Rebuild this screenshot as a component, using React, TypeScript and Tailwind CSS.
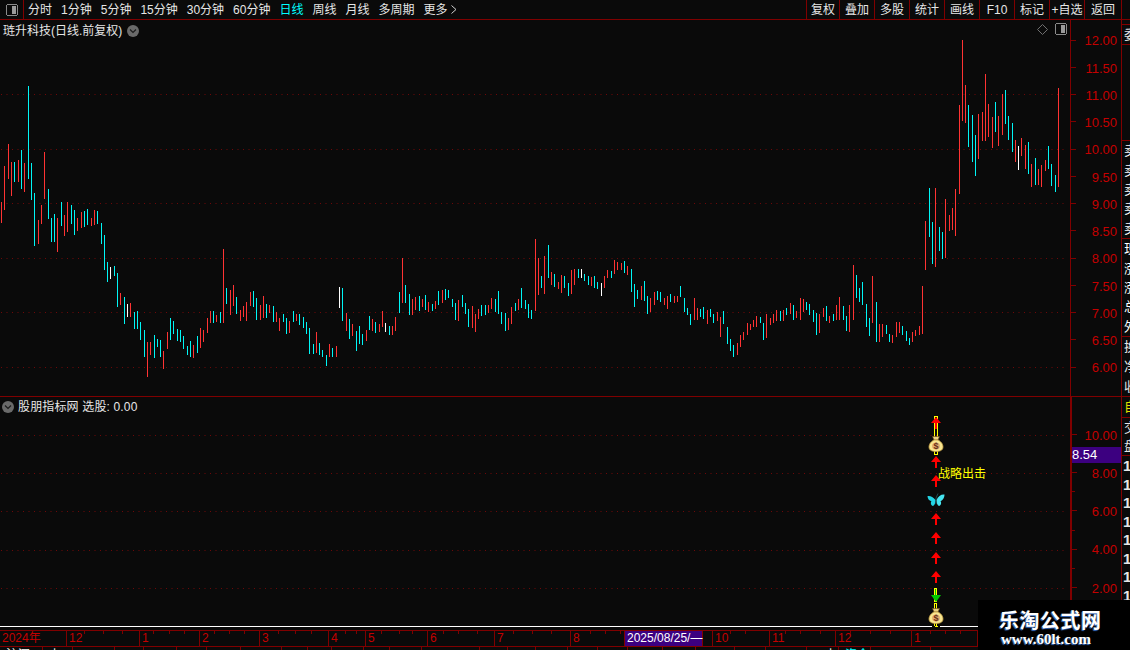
import React from 'react';

type Bar = [number, number, number, string];

// bar coords were read off 3x crops, so each group keeps its crop origin
const groups: { x0: number; y0: number; bars: Bar[] }[] = [
  {
    x0: 0,
    y0: 130,
    bars: [
      [4,216,279,'r'],[13,108,240,'r'],[25,42,147,'r'],[34,96,198,'r'],[43,96,156,'c'],[55,90,156,'r'],[64,60,177,'c'],[73,99,186,'r'],[85,-132,147,'c'],[94,99,210,'c'],
      [103,189,348,'c'],[115,270,342,'r'],[124,225,282,'r'],[133,66,207,'r'],[145,177,267,'c'],[154,264,336,'c'],[163,252,336,'c'],[172,264,366,'r'],[184,216,288,'c'],[193,255,318,'r'],
      [202,216,306,'r'],[214,225,282,'c'],[223,240,315,'c'],[232,264,303,'r'],[244,246,294,'r'],[253,243,291,'c'],[262,237,285,'c'],[274,264,288,'r'],[283,240,285,'r'],[292,243,282,'c'],
      [304,279,342,'c'],[313,315,420,'c'],[322,396,456,'c'],[331,411,447,'w'],[343,408,438,'c'],[352,429,531,'c'],[361,489,525,'r'],[373,501,582,'c'],[382,522,561,'w'],[391,519,561,'r'],
      [403,546,597,'c'],[412,543,597,'c'],[421,576,630,'c'],[433,600,681,'c'],[442,636,741,'r'],[451,636,675,'r'],[463,615,684,'c'],[472,627,651,'c'],[481,630,681,'c'],[490,663,717,'r'],
      [502,606,657,'r'],[511,564,630,'c'],[520,573,612,'c'],[532,597,633,'c'],[541,600,636,'c'],[550,618,657,'c'],[562,648,675,'c'],[571,633,681,'c'],[580,645,684,'r'],[592,618,669,'c'],
      [601,594,654,'r'],[610,600,636,'r'],[622,564,609,'r'],[631,543,579,'r'],[640,543,579,'c'],[649,555,576,'r'],[661,546,579,'c'],[670,357,579,'r'],[679,474,522,'c'],[691,480,555,'r'],
      [700,465,528,'r'],[709,501,552,'c'],[721,540,573,'r'],[730,528,561,'r'],[739,516,573,'r'],[751,486,528,'r'],[760,483,531,'c'],[769,504,570,'c'],[781,525,570,'r'],[790,498,564,'r'],
      [799,522,564,'c'],[808,525,549,'r'],[820,528,576,'c'],[829,546,576,'r'],[838,564,603,'r'],[850,552,576,'c'],[859,564,612,'c'],[868,573,609,'r'],[880,543,576,'c'],[889,552,573,'r'],
      [898,552,585,'c'],[910,561,594,'c'],[919,576,612,'c'],[928,594,672,'c'],[940,642,672,'c'],[949,606,669,'r'],[958,639,675,'c'],[967,660,681,'c'],[979,675,708,'c'],[988,642,681,'r'],
      [997,654,681,'c'],[1009,648,681,'r'],[1018,471,534,'w'],[1027,474,573,'c'],[1039,549,603,'r'],[1048,567,627,'c'],
    ],
  },
  {
    x0: 350,
    y0: 230,
    bars: [
      [7,282,318,'r'],[19,303,363,'c'],[28,288,342,'c'],[37,312,345,'c'],[49,300,333,'r'],[58,258,300,'c'],[67,267,303,'r'],[76,276,309,'c'],[88,282,306,'r'],[97,243,291,'r'],
      [106,279,306,'w'],[118,288,315,'c'],[127,288,315,'r'],[136,261,303,'r'],[148,186,249,'c'],[157,84,219,'r'],[166,165,219,'c'],[178,192,255,'c'],[187,207,255,'r'],[196,201,240,'r'],
      [208,198,243,'c'],[217,207,231,'r'],[226,195,240,'c'],[235,216,246,'r'],[247,222,243,'c'],[256,213,237,'r'],[265,183,225,'c'],[277,180,219,'r'],[286,177,210,'c'],[295,180,204,'c'],
      [307,207,231,'c'],[316,219,270,'c'],[325,210,273,'r'],[337,195,231,'c'],[346,219,252,'c'],[355,237,291,'c'],[367,228,294,'r'],[376,252,306,'r'],[385,237,267,'r'],[394,225,258,'c'],
      [406,225,255,'c'],[415,225,249,'r'],[424,204,237,'r'],[436,207,246,'c'],[445,183,252,'c'],[454,246,282,'c'],[466,249,303,'c'],[475,264,300,'r'],[484,231,282,'r'],[496,219,243,'c'],
      [505,207,240,'r'],[514,174,234,'c'],[526,210,237,'c'],[535,222,264,'c'],[544,240,267,'c'],[556,27,243,'r'],[565,84,195,'r'],[574,138,174,'c'],[583,78,192,'r'],[595,45,144,'c'],
      [604,126,165,'r'],[613,132,171,'c'],[625,156,177,'r'],[634,135,189,'r'],[643,138,174,'c'],[655,159,198,'c'],[664,120,192,'r'],[673,117,165,'r'],[685,117,144,'c'],[694,117,144,'w'],
      [703,132,153,'c'],[715,138,165,'c'],[724,141,168,'r'],[733,138,174,'c'],[742,156,177,'c'],[754,159,198,'w'],[763,138,174,'r'],[772,120,144,'r'],[784,123,144,'c'],[793,90,132,'r'],
      [802,96,120,'r'],[814,99,120,'r'],[823,93,129,'c'],[832,108,135,'r'],[844,117,186,'c'],[853,162,231,'c'],[862,180,207,'c'],[874,168,210,'r'],[883,153,213,'c'],[892,198,252,'c'],
    ],
  },
  {
    x0: 650,
    y0: 230,
    bars: [
      [1,204,246,'r'],[13,186,225,'r'],[22,183,210,'c'],[31,186,216,'c'],[43,204,225,'r'],[52,198,237,'r'],[61,192,216,'c'],[73,198,219,'r'],[82,198,216,'r'],[91,168,201,'c'],
      [103,204,246,'c'],[112,234,255,'c'],[121,252,285,'c'],[133,204,270,'r'],[142,234,270,'r'],[151,237,261,'c'],[160,231,267,'c'],[172,240,282,'r'],[181,237,261,'c'],[190,252,279,'c'],
      [202,246,273,'r'],[211,261,321,'r'],[220,243,282,'c'],[232,291,342,'c'],[241,327,363,'c'],[250,345,381,'c'],[262,339,375,'r'],[271,315,351,'r'],[280,306,330,'r'],[292,279,315,'r'],
      [301,282,300,'r'],[310,270,291,'r'],[319,258,291,'r'],[331,261,279,'c'],[340,279,330,'c'],[349,252,324,'r'],[361,264,285,'r'],[370,252,279,'r'],[379,240,273,'r'],[391,243,273,'c'],
      [400,240,273,'r'],[409,234,255,'c'],[421,219,252,'r'],[430,225,270,'c'],[439,243,264,'r'],[451,204,270,'r'],[460,207,246,'r'],[469,216,240,'c'],[478,222,255,'c'],[490,240,276,'c'],
      [499,249,315,'c'],[508,252,309,'r'],[520,234,261,'r'],[529,228,273,'c'],[538,258,279,'r'],[550,252,273,'c'],[559,225,270,'r'],[568,201,270,'r'],[580,228,270,'c'],[589,258,303,'c'],
      [598,225,306,'r'],[610,105,270,'r'],[619,135,204,'c'],[628,174,216,'c'],[637,156,225,'c'],[649,222,291,'c'],[658,264,318,'c'],[667,138,279,'r'],[679,216,336,'c'],[688,282,336,'r'],
      [697,282,321,'r'],[709,285,312,'c'],[718,312,336,'c'],[727,315,339,'r'],[739,276,321,'r'],[748,276,309,'r'],[757,288,315,'c'],[769,303,333,'c'],[778,324,345,'c'],[787,306,336,'r'],
      [796,300,318,'r'],[808,288,315,'r'],[817,168,312,'r'],
    ],
  },
  {
    x0: 900,
    y0: 30,
    bars: [
      [76,573,720,'r'],[88,474,621,'c'],[97,576,702,'c'],[106,474,711,'r'],[118,591,663,'c'],[127,606,687,'c'],[136,507,684,'r'],[148,555,603,'r'],[157,534,600,'r'],[166,477,618,'r'],
      [178,225,492,'r'],[187,30,273,'r'],[196,165,279,'r'],[205,225,351,'c'],[217,255,396,'c'],[226,315,438,'c'],[235,252,387,'r'],[247,246,333,'r'],[256,132,333,'r'],[265,222,321,'r'],
      [277,261,354,'r'],[286,216,306,'c'],[295,258,348,'r'],[307,192,315,'r'],[316,180,282,'c'],[325,258,330,'c'],[337,279,366,'c'],[346,330,396,'r'],[355,348,420,'w'],[364,324,378,'r'],
      [376,345,417,'r'],[385,336,432,'c'],[394,402,471,'r'],[406,384,465,'c'],[415,417,465,'r'],[424,405,471,'r'],[436,390,423,'r'],[445,348,417,'c'],[454,402,468,'c'],[466,435,486,'c'],[475,174,471,'r'],
    ],
  },
];

const barColor: Record<string, string> = { r: '#ff3333', c: '#00f6f6', w: '#ffffff' };

const navItems = ['分时', '1分钟', '5分钟', '15分钟', '30分钟', '60分钟', '日线', '周线', '月线', '多周期'];
const toolItems = [
  { t: '复权', w: 'w-[33px]' },
  { t: '叠加', w: 'w-[35px]' },
  { t: '多股', w: 'w-[35px]' },
  { t: '统计', w: 'w-[35px]' },
  { t: '画线', w: 'w-[35px]' },
  { t: 'F10', w: 'w-[35px]' },
  { t: '标记', w: 'w-[35px]' },
  { t: '+自选', w: 'w-[35px]' },
  { t: '返回', w: 'w-[37px]' },
];
const prices = ['12.00', '11.50', '11.00', '10.50', '10.00', '9.50', '9.00', '8.50', '8.00', '7.50', '7.00', '6.50', '6.00'];
const lowerScale = ['10.00', '', '8.00', '', '6.00', '', '4.00', '', '2.00'];

const monthCells = [
  { w: 67, t: '2024年' }, { w: 73, t: '12' }, { w: 60, t: '1' }, { w: 60, t: '2' }, { w: 69, t: '3' }, { w: 37, t: '4' },
  { w: 62, t: '5' }, { w: 67, t: '6' }, { w: 76, t: '7' }, { w: 54, t: '8' }, { w: 78, t: '2025/08/25/—', on: true },
  { w: 10, t: '' }, { w: 57, t: '10' }, { w: 66, t: '11' }, { w: 76, t: '12' }, { w: 66, t: '1' },
];
const timeTicks = [84, 103, 122, 153, 169, 184, 214, 229, 244, 278, 295, 311, 345, 356, 381, 399, 412, 443, 458, 477, 513, 532, 551, 590, 605, 620, 730, 745, 785, 800, 820, 850, 870, 890, 930, 945, 960];
const bottomCells = [
  { w: 43, t: '沪深' }, { w: 30, t: '上' }, { w: 42 }, { w: 29 }, { w: 33 }, { w: 30 }, { w: 34 }, { w: 41 }, { w: 26 },
  { w: 24 }, { w: 32 }, { w: 26 }, { w: 32 }, { w: 58 }, { w: 28 }, { w: 28 }, { w: 32 }, { w: 30 }, { w: 30 }, { w: 35 },
  { w: 33 }, { w: 39 }, { w: 31 }, { w: 41 }, { w: 32, t: '上', pad: 'pl-[18px]' }, { w: 32, t: '资金', cyan: true }, { w: 60 },
];

const arrowsY = [423, 462, 481, 519, 538, 558, 577];

function Chevron() {
  return (
    <span className="flex h-[12px] w-[12px] items-center justify-center rounded-full bg-[#6a6a6a]">
      <svg width="8" height="6" viewBox="0 0 8 6">
        <path d="M1 1.5 L4 4.5 L7 1.5" fill="none" stroke="#1c1c1c" strokeWidth="1.2" />
      </svg>
    </span>
  );
}

function PanelIcon({ className }: { className: string }) {
  return (
    <svg className={className} width="12" height="12" viewBox="0 0 12 12" shapeRendering="crispEdges">
      <rect x="0.5" y="0.5" width="11" height="11" rx="2" fill="none" stroke="#8a8a8a" />
      <rect x="6" y="2" width="4" height="8" fill="#9a9a9a" />
    </svg>
  );
}

function PriceChart() {
  return (
    <svg width="1070" height="376" viewBox="0 20 1070 376" className="block">
      {[94, 149, 203, 258, 312, 367].map((y) => (
        <line key={y} x1="1" x2="1067" y1={y + 0.5} y2={y + 0.5} stroke="#6e0808" strokeDasharray="1 4.5" />
      ))}
      {groups.map((g) =>
        g.bars.map(([x, t, b, c]) => (
          <rect
            key={`${g.x0}-${x}`}
            x={g.x0 + Math.floor(x / 3)}
            y={g.y0 + Math.round(t / 3)}
            width="1"
            height={Math.round((b - t) / 3)}
            fill={barColor[c]}
            shapeRendering="crispEdges"
          />
        )),
      )}
    </svg>
  );
}

function MoneyBag({ cy }: { cy: number }) {
  return (
    <g transform={`translate(936 ${cy})`}>
      <path d="M-3.5 -8.5 L3.5 -8.5 L2 -5 L-2 -5 Z" fill="#e8d080" stroke="#6a4a18" strokeWidth="0.6" />
      <path d="M-2 -5 C-6 -3 -7 0 -7 2 C-7 5.5 -3.5 6.5 0 6.5 C3.5 6.5 7 5.5 7 2 C7 0 6 -3 2 -5 Z" fill="#f8e690" stroke="#c09a40" strokeWidth="0.8" />
      <ellipse cx="0" cy="1" rx="4" ry="3.6" fill="#e4b070" />
      <text x="0" y="4.2" textAnchor="middle" fontSize="9" fontWeight="700" fontFamily="Liberation Sans, sans-serif" fill="#6a3018">
        $
      </text>
    </g>
  );
}

function SignalLayer() {
  return (
    <svg width="1070" height="229" viewBox="0 397 1070 229" className="block">
      {[435, 473, 511, 550, 588].map((y) => (
        <line key={y} x1="1" x2="1067" y1={y + 0.5} y2={y + 0.5} stroke="#6e0808" strokeDasharray="1 4.5" />
      ))}
      {/* yellow outlined stems */}
      <g shapeRendering="crispEdges">
        <rect x="934" y="416" width="3" height="38" fill="none" stroke="#ffff00" />
        <rect x="935" y="417" width="1" height="36" fill="#0a0a0a" />
        <rect x="934.5" y="588.5" width="2" height="13" fill="#00c800" stroke="#ffff00" />
        <rect x="934.5" y="603.5" width="2" height="23" fill="#0a0a0a" stroke="#ffff00" />
      </g>
      {arrowsY.map((y) => (
        <path key={y} d={`M936 ${y - 6} L941 ${y} L937 ${y} L937 ${y + 6} L935 ${y + 6} L935 ${y} L931 ${y} Z`} fill="#ff0000" />
      ))}
      <path d="M931 595 L941 595 L936 602 Z" fill="#00c800" />
      {/* butterfly */}
      <g transform="translate(936 500)">
        <path d="M-0.5 0 C-3 -3.5 -6 -4.5 -8.5 -4 C-8.5 -1.5 -7 0.8 -4.5 1.2 C-5.8 2.6 -5 5.5 -3 6 C-1.5 5.5 -0.5 3 -0.5 0 Z" fill="#22d4e4" />
        <path d="M0.5 0 C2 -4 5.5 -6 8.5 -5.5 C8.5 -2.5 6.8 0.6 4.5 1.2 C5.8 2.6 5 5.5 3 6 C1.5 5.5 0.5 3 0.5 0 Z" fill="#46e4f0" />
        <path d="M0 -2 L0 4 M0 -2 L2 -6.5" stroke="#2a6a70" strokeWidth="0.7" fill="none" />
      </g>
      <MoneyBag cy={445} />
      <MoneyBag cy={617} />
    </svg>
  );
}

function SideRows({ items, color = 'text-white' }: { items: string[]; color?: string }) {
  return (
    <div className="flex flex-col border-b border-[#800000]">
      {items.map((t, i) => (
        <div key={i} className={`flex h-[19.4px] items-center whitespace-nowrap pl-[2px] text-[13px] leading-none ${color}`}>
          {t}
        </div>
      ))}
    </div>
  );
}

export default function App() {
  return (
    <div className="relative flex h-[650px] w-[1130px] flex-col overflow-hidden bg-[#0a0a0a] font-['Liberation_Sans','Noto_Sans_CJK_SC',sans-serif] text-[12px] text-[#e6e6e6]">
      {/* top toolbar */}
      <div className="flex h-[20px] shrink-0 items-stretch border-b border-[#800000]">
        <div className="flex w-[24px] items-center justify-center border-r border-[#800000]">
          <PanelIcon className="block" />
        </div>
        <div className="flex items-center gap-[9px] pl-[4px]">
          {navItems.map((n) => (
            <span key={n} className={n === '日线' ? 'text-[#00ffff]' : ''}>
              {n}
            </span>
          ))}
          <span className="flex items-center gap-[3px]">
            更多
            <svg width="6" height="9" viewBox="0 0 6 9">
              <path d="M0.5 0.5 L5 4.5 L0.5 8.5" fill="none" stroke="#d0d0d0" />
            </svg>
          </span>
        </div>
        <div className="ml-auto flex h-full">
          {toolItems.map((n) => (
            <div key={n.t} className={`flex items-center justify-center border-l border-[#800000] whitespace-nowrap ${n.w}`}>
              {n.t}
            </div>
          ))}
          <div className="w-[9px] border-l border-[#800000]" />
        </div>
      </div>

      <div className="flex min-h-0 flex-1">
        <div className="flex w-[1121px] shrink-0 flex-col">
          {/* price panel */}
          <div className="flex h-[377px] shrink-0 border-b border-[#800000]">
            <div className="relative w-[1070px] shrink-0">
              <PriceChart />
              <div className="absolute left-[3px] top-[2px] flex items-center gap-[5px]">
                <span>琏升科技(日线.前复权)</span>
                <Chevron />
              </div>
              <div className="absolute right-[3px] top-[3px] flex items-center gap-[7px]">
                <svg width="11" height="11" viewBox="0 0 11 11">
                  <path d="M5.5 0.5 L10.5 5.5 L5.5 10.5 L0.5 5.5 Z" fill="none" stroke="#6f6f6f" />
                </svg>
                <PanelIcon className="block" />
              </div>
            </div>
            <div className="flex w-[51px] flex-col border-l border-[#800000] pt-[6.4px] text-[13px] text-[#c40000]">
              {prices.map((p) => (
                <div key={p} className="flex h-[27.25px] shrink-0 items-center justify-between pr-[4px]">
                  <span className="h-px w-[5px] bg-[#800000]" />
                  <span className="pt-[2px]">{p}</span>
                </div>
              ))}
            </div>
          </div>

          {/* indicator panel */}
          <div className="flex h-[230px] shrink-0 border-b border-white">
            <div className="relative w-[1070px] shrink-0">
              <SignalLayer />
              <div className="absolute left-[2px] top-[1px] flex items-center gap-[4px]">
                <Chevron />
                <span className="tracking-[0.15px]">股朋指标网 选股: 0.00</span>
              </div>
              <span className="absolute left-[938px] top-[68px] text-[#ffff00]">战略出击</span>
              {/* stem breaks the white base line */}
              <div className="absolute -bottom-px left-[932px] flex h-px w-[8px] justify-center bg-[#0a0a0a]">
                <span className="w-[3px] bg-[#ffff00]" />
              </div>
            </div>
            <div className="relative flex w-[51px] flex-col border-l-2 border-[#800000] pt-[28px] text-[13px] text-[#c40000]">
              {lowerScale.map((p, i) => (
                <div key={i} className="flex h-[19.1px] shrink-0 items-center justify-between pr-[4px]">
                  <span className={`h-px bg-[#800000] ${p ? 'w-[5px]' : 'w-[3px]'}`} />
                  <span className="pt-[2px]">{p}</span>
                </div>
              ))}
              <div className="absolute left-0 right-0 top-[50px] flex h-[16px] items-center bg-[#3c0080] text-[13px] text-white">8.54</div>
            </div>
          </div>

          {/* time axis */}
          <div className="relative mt-[3px] flex h-[17px] w-[978px] shrink-0 border-y border-[#800000] text-[12px] leading-[15px] text-[#c40000]">
            {monthCells.map((c, i) => (
              <div
                key={i}
                style={{ width: c.w }}
                className={`shrink-0 border-r border-[#800000] whitespace-nowrap pl-[2px] ${c.on ? 'bg-[#3c0080] text-white' : ''}`}
              >
                {c.t}
              </div>
            ))}
            <svg className="absolute left-0 top-0" width="978" height="3">
              {timeTicks.map((x) => (
                <rect key={x} x={x} y="0" width="1" height="3" fill="#800000" />
              ))}
            </svg>
          </div>

          {/* tab row, cut off by the window */}
          <div className="flex h-[10px] shrink-0 text-white">
            {bottomCells.map((c, i) => (
              <div
                key={i}
                style={{ width: c.w }}
                className={`shrink-0 border-r border-[#800000] pt-[1px] leading-[14px] whitespace-nowrap ${c.pad ?? 'pl-[6px]'} ${c.cyan ? 'text-[#00ffff]' : ''}`}
              >
                {c.t}
              </div>
            ))}
          </div>
        </div>

        {/* right info strip, clipped by the window */}
        <div className="flex w-[9px] shrink-0 flex-col overflow-hidden border-l border-[#800000]">
          <div className="flex h-[5px] shrink-0 border-b border-[#800000]" />
          <div className="flex h-[20px] shrink-0 items-center border-b border-[#800000] pl-[2px] text-[13px] whitespace-nowrap">委比</div>
          <div className="h-[96px] shrink-0 border-b border-[#800000]" />
          <SideRows items={['卖', '卖', '卖', '卖', '卖']} />
          <SideRows items={['现', '涨', '涨', '总', '外']} />
          <div className="flex h-[60px] shrink-0 flex-col justify-around border-b border-[#800000] pl-[2px] text-[13px] leading-none">
            <span>换</span>
            <span>净</span>
            <span>收</span>
          </div>
          <div className="flex h-[21px] shrink-0 items-center border-b border-[#800000] pl-[2px] text-[13px] text-[#e0e000]">自</div>
          <div className="flex h-[38px] shrink-0 flex-col justify-around border-b border-[#800000] pl-[2px] text-[13px] leading-none">
            <span>交</span>
            <span>盘</span>
          </div>
          <div className="flex flex-col pl-[1px] pt-[1px] text-[15px] font-bold leading-[18.6px]">
            {[0, 1, 2, 3, 4, 5, 6, 7].map((i) => (
              <span key={i}>1</span>
            ))}
          </div>
        </div>
      </div>

      {/* watermark pasted over the corner */}
      <div className="absolute bottom-0 right-0 flex h-[50px] w-[152px] flex-col bg-black pt-[8px]">
        <span className="pl-[21px] font-['Noto_Sans_CJK_SC',sans-serif] text-[20px] font-bold leading-[24px] tracking-[0.5px] text-white [text-shadow:-1px_1px_1px_#3a70c8]">乐淘公式网</span>
        <span className="pl-[23px] font-['Liberation_Serif',serif] text-[15px] font-bold leading-[15px] text-white [text-shadow:-1px_1px_1px_#3a70c8]">www.60lt.com</span>
      </div>
    </div>
  );
}
